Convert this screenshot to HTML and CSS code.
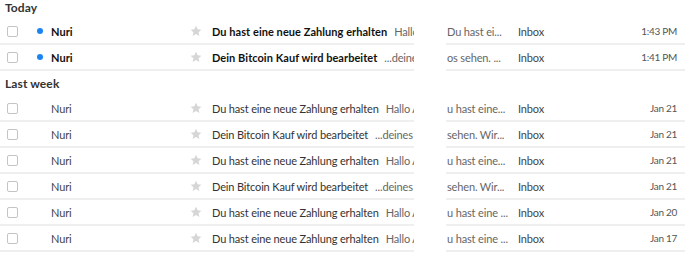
FILE: index.html
```html
<!DOCTYPE html>
<html lang="de">
<head>
<meta charset="utf-8">
<link rel="stylesheet" href="styles.css">
</head>
<body>
<div class="list">
  <div class="group">Today</div>
  <div class="row unread">
    <div class="c-check"><span class="box"></span></div>
    <div class="c-dot"><span class="dot"></span></div>
    <div class="c-name">Nuri</div>
    <div class="c-star"><svg viewBox="0 0 24 24" class="star"><path d="M12 1.5l3.2 7.1 7.6.7-5.7 5.1 1.7 7.6L12 18.1 5.2 22l1.7-7.6L1.2 9.3l7.6-.7z"/></svg></div>
    <div class="c-subj"><span class="subj">Du hast eine neue Zahlung erhalten</span><span class="prev">Hallo Alex</span></div>
    <div class="c-gap"></div>
    <div class="c-prev2">Du hast ei...</div>
    <div class="c-folder">Inbox</div>
    <div class="c-time">1:43 PM</div>
  </div>
  <div class="row unread">
    <div class="c-check"><span class="box"></span></div>
    <div class="c-dot"><span class="dot"></span></div>
    <div class="c-name">Nuri</div>
    <div class="c-star"><svg viewBox="0 0 24 24" class="star"><path d="M12 1.5l3.2 7.1 7.6.7-5.7 5.1 1.7 7.6L12 18.1 5.2 22l1.7-7.6L1.2 9.3l7.6-.7z"/></svg></div>
    <div class="c-subj"><span class="subj">Dein Bitcoin Kauf wird bearbeitet</span><span class="prev">...deines Bitcoin</span></div>
    <div class="c-gap"></div>
    <div class="c-prev2">os sehen. ...</div>
    <div class="c-folder">Inbox</div>
    <div class="c-time">1:41 PM</div>
  </div>
  <div class="group group-2">Last week</div>
  <div class="row">
    <div class="c-check"><span class="box"></span></div>
    <div class="c-dot"></div>
    <div class="c-name">Nuri</div>
    <div class="c-star"><svg viewBox="0 0 24 24" class="star"><path d="M12 1.5l3.2 7.1 7.6.7-5.7 5.1 1.7 7.6L12 18.1 5.2 22l1.7-7.6L1.2 9.3l7.6-.7z"/></svg></div>
    <div class="c-subj"><span class="subj">Du hast eine neue Zahlung erhalten</span><span class="prev">Hallo Alex</span></div>
    <div class="c-gap"></div>
    <div class="c-prev2">u hast eine...</div>
    <div class="c-folder">Inbox</div>
    <div class="c-time">Jan 21</div>
  </div>
  <div class="row">
    <div class="c-check"><span class="box"></span></div>
    <div class="c-dot"></div>
    <div class="c-name">Nuri</div>
    <div class="c-star"><svg viewBox="0 0 24 24" class="star"><path d="M12 1.5l3.2 7.1 7.6.7-5.7 5.1 1.7 7.6L12 18.1 5.2 22l1.7-7.6L1.2 9.3l7.6-.7z"/></svg></div>
    <div class="c-subj"><span class="subj">Dein Bitcoin Kauf wird bearbeitet</span><span class="prev">...deines Bitcoin</span></div>
    <div class="c-gap"></div>
    <div class="c-prev2">sehen. Wir...</div>
    <div class="c-folder">Inbox</div>
    <div class="c-time">Jan 21</div>
  </div>
  <div class="row">
    <div class="c-check"><span class="box"></span></div>
    <div class="c-dot"></div>
    <div class="c-name">Nuri</div>
    <div class="c-star"><svg viewBox="0 0 24 24" class="star"><path d="M12 1.5l3.2 7.1 7.6.7-5.7 5.1 1.7 7.6L12 18.1 5.2 22l1.7-7.6L1.2 9.3l7.6-.7z"/></svg></div>
    <div class="c-subj"><span class="subj">Du hast eine neue Zahlung erhalten</span><span class="prev">Hallo Alex</span></div>
    <div class="c-gap"></div>
    <div class="c-prev2">u hast eine...</div>
    <div class="c-folder">Inbox</div>
    <div class="c-time">Jan 21</div>
  </div>
  <div class="row">
    <div class="c-check"><span class="box"></span></div>
    <div class="c-dot"></div>
    <div class="c-name">Nuri</div>
    <div class="c-star"><svg viewBox="0 0 24 24" class="star"><path d="M12 1.5l3.2 7.1 7.6.7-5.7 5.1 1.7 7.6L12 18.1 5.2 22l1.7-7.6L1.2 9.3l7.6-.7z"/></svg></div>
    <div class="c-subj"><span class="subj">Dein Bitcoin Kauf wird bearbeitet</span><span class="prev">...deines Bitcoin</span></div>
    <div class="c-gap"></div>
    <div class="c-prev2">sehen. Wir...</div>
    <div class="c-folder">Inbox</div>
    <div class="c-time">Jan 21</div>
  </div>
  <div class="row">
    <div class="c-check"><span class="box"></span></div>
    <div class="c-dot"></div>
    <div class="c-name">Nuri</div>
    <div class="c-star"><svg viewBox="0 0 24 24" class="star"><path d="M12 1.5l3.2 7.1 7.6.7-5.7 5.1 1.7 7.6L12 18.1 5.2 22l1.7-7.6L1.2 9.3l7.6-.7z"/></svg></div>
    <div class="c-subj"><span class="subj">Du hast eine neue Zahlung erhalten</span><span class="prev">Hallo Alex</span></div>
    <div class="c-gap"></div>
    <div class="c-prev2">u hast eine ...</div>
    <div class="c-folder">Inbox</div>
    <div class="c-time">Jan 20</div>
  </div>
  <div class="row">
    <div class="c-check"><span class="box"></span></div>
    <div class="c-dot"></div>
    <div class="c-name">Nuri</div>
    <div class="c-star"><svg viewBox="0 0 24 24" class="star"><path d="M12 1.5l3.2 7.1 7.6.7-5.7 5.1 1.7 7.6L12 18.1 5.2 22l1.7-7.6L1.2 9.3l7.6-.7z"/></svg></div>
    <div class="c-subj"><span class="subj">Du hast eine neue Zahlung erhalten</span><span class="prev">Hallo Alex</span></div>
    <div class="c-gap"></div>
    <div class="c-prev2">u hast eine ...</div>
    <div class="c-folder">Inbox</div>
    <div class="c-time">Jan 17</div>
  </div>
</div>
</body>
</html>
```

FILE: styles.css
```css
html, body {
  margin: 0;
  padding: 0;
  background: #ffffff;
}

body {
  font-family: Lato, "Open Sans", "Liberation Sans", sans-serif;
  font-size: 11px;
  letter-spacing: -0.15px;
  color: #333;
}

.list {
  width: 685px;
}

.group {
  height: 19px;
  line-height: 16px;
  padding-left: 5px;
  font-weight: 700;
  font-size: 12px;
  letter-spacing: 0.1px;
  color: #333;
}

.group-2 {
  height: 25px;
  line-height: 26px;
}

.row {
  display: grid;
  grid-template-columns: 30px 20px 139px 14px 211px 32px 72px 102px 65px;
  height: 26px;
}

.row > div {
  display: flex;
  align-items: center;
  height: 24px;
  border-bottom: 2px solid #efefef;
  white-space: nowrap;
  overflow: hidden;
}

.row > .c-gap {
  border-bottom-color: transparent;
}

.c-check {
  padding-left: 7px;
}

.box {
  width: 9px;
  height: 9px;
  border: 1px solid #c4c4c4;
  border-radius: 2px;
  background: #fff;
}

.c-dot {
  justify-content: center;
}

.dot {
  width: 6px;
  height: 6px;
  border-radius: 50%;
  background: #1b84f5;
}

.c-name {
  padding-left: 1px;
  color: #444;
}

.c-star {
  justify-content: center;
}

.star {
  width: 12px;
  height: 12px;
  fill: #d6d6d6;
}

.c-subj {
  padding-left: 9px;
}

.subj {
  color: #333;
}

.prev {
  margin-left: 7px;
  color: #666;
}

.c-prev2 {
  padding-left: 1px;
  color: #666;
}

.c-folder {
  color: #444;
}

.c-time {
  justify-content: flex-end;
  padding-right: 8px;
  font-size: 10px;
  letter-spacing: -0.3px;
  color: #555;
}

.unread .c-name,
.unread .subj {
  font-weight: 700;
  color: #111;
  letter-spacing: 0.05px;
}
```
